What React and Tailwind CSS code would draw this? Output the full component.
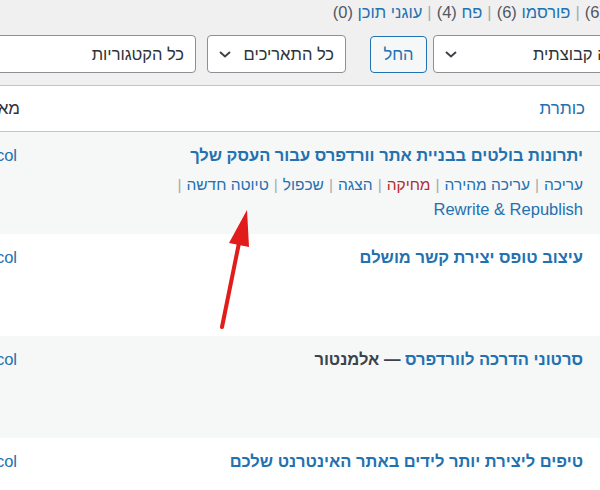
import React from 'react'

const font = { fontFamily: '"Liberation Sans", "DejaVu Sans", Arial, sans-serif' }

const statusLinks = [
  { label: 'הכל', count: 6 },
  { label: 'פורסמו', count: 6 },
  { label: 'פח', count: 4 },
  { label: 'עוגני תוכן', count: 0 },
]

const posts = [
  { title: 'יתרונות בולטים בבניית אתר וורדפרס עבור העסק שלך', actions: true },
  { title: 'עיצוב טופס יצירת קשר מושלם' },
  { title: 'סרטוני הדרכה לוורדפרס', state: 'אלמנטור' },
  { title: 'טיפים ליצירת יותר לידים באתר האינטרנט שלכם' },
]

const Chevron = () => (
  <svg viewBox="0 0 16 16" className="w-[16px] h-[16px]" fill="none" stroke="#3c434a" strokeWidth="2">
    <path d="M3 6l5 4.5 5-4.5" />
  </svg>
)

const Select = ({ label, className }) => (
  <div
    className={`h-[38px] flex items-center justify-between bg-white border border-[#8c8f94] rounded-[4px] pl-[9px] pr-[11px] text-[16.5px] text-[#2c3338] shrink-0 ${className}`}
  >
    <span className="whitespace-nowrap">{label}</span>
    <Chevron />
  </div>
)

const Sep = () => <span className="text-[#a7aaad] mx-[5px]">|</span>

const RowActions = () => {
  const items = [
    { t: 'עריכה' },
    { t: 'עריכה מהירה' },
    { t: 'מחיקה', red: true },
    { t: 'הצגה' },
    { t: 'שכפול' },
    { t: 'טיוטה חדשה' },
  ]
  return (
    <div className="leading-[24px] pt-[5px]">
      <div className="whitespace-nowrap text-[15.5px]">
        {items.map((it, i) => (
          <span key={i}>
            <span className={it.red ? 'text-[#b32d2e]' : 'text-[#2271b1]'}>{it.t}</span>
            <Sep />
          </span>
        ))}
      </div>
      <div className="text-[#2271b1] text-[16.5px]">Rewrite &amp; Republish</div>
    </div>
  )
}

export default function App() {
  return (
    <div dir="rtl" style={font} className="relative w-[600px] h-[490px] overflow-hidden bg-[#f0f0f1]">
      {/* status links */}
      <div className="h-[25px] flex items-center -mr-[37px] text-[16.5px] whitespace-nowrap">
        {statusLinks.map((s, i) => (
          <span key={i}>
            <span className="text-[#2271b1]">{s.label}</span>{' '}
            <span className="text-[#50575e]">({s.count})</span>
            {i < statusLinks.length - 1 && <Sep />}
          </span>
        ))}
      </div>

      {/* filters */}
      <div className="flex items-center mt-[10px] -mr-[52px]">
        <Select label="פעולה קבוצתית" className="w-[219px]" />
        <button className="h-[37px] w-[57px] mr-[6px] border border-[#2271b1] rounded-[4px] bg-[#f6f7f7] text-[#2271b1] text-[16.5px] shrink-0">
          החל
        </button>
        <Select label="כל התאריכים" className="w-[139px] mr-[24px]" />
        <Select label="כל הקטגוריות" className="w-[220px] mr-[11px]" />
      </div>

      {/* table */}
      <div className="mt-[12px] -ml-[100px] border-t border-[#c3c4c7] bg-white">
        <div className="flex h-[46px] items-center border-b border-[#c3c4c7] text-[17px]">
          <div className="flex-1 pr-[15px] text-[#2271b1]">כותרת</div>
          <div className="w-[120px] text-[#2c3338] whitespace-nowrap">מאת</div>
        </div>
        {posts.map((p, i) => (
          <div key={i} className={`flex h-[102px] ${i % 2 === 0 ? 'bg-[#f6f7f7]' : 'bg-white'}`}>
            <div className="flex-1 pr-[17px] pt-[10px]">
              <div className="text-[16.5px] leading-[26px] font-bold">
                <span className="text-[#2271b1]">{p.title}</span>
                {p.state && <span className="text-[#3c434a]"> — {p.state}</span>}
              </div>
              {p.actions && <RowActions />}
            </div>
            <div className="w-[120px] pt-[10px] text-[16.5px] leading-[26px]">
              <span dir="ltr" className="block text-right pr-[3px] text-[#2271b1]">Protocol</span>
            </div>
          </div>
        ))}
      </div>

      {/* red arrow annotation */}
      <svg className="absolute left-0 top-0 pointer-events-none" width="600" height="490">
        <line x1="222" y1="327" x2="240" y2="238" stroke="#e21b1b" strokeWidth="4" strokeLinecap="round" />
        <polygon points="247,210 229,243 249,247" fill="#e21b1b" />
      </svg>
    </div>
  )
}
